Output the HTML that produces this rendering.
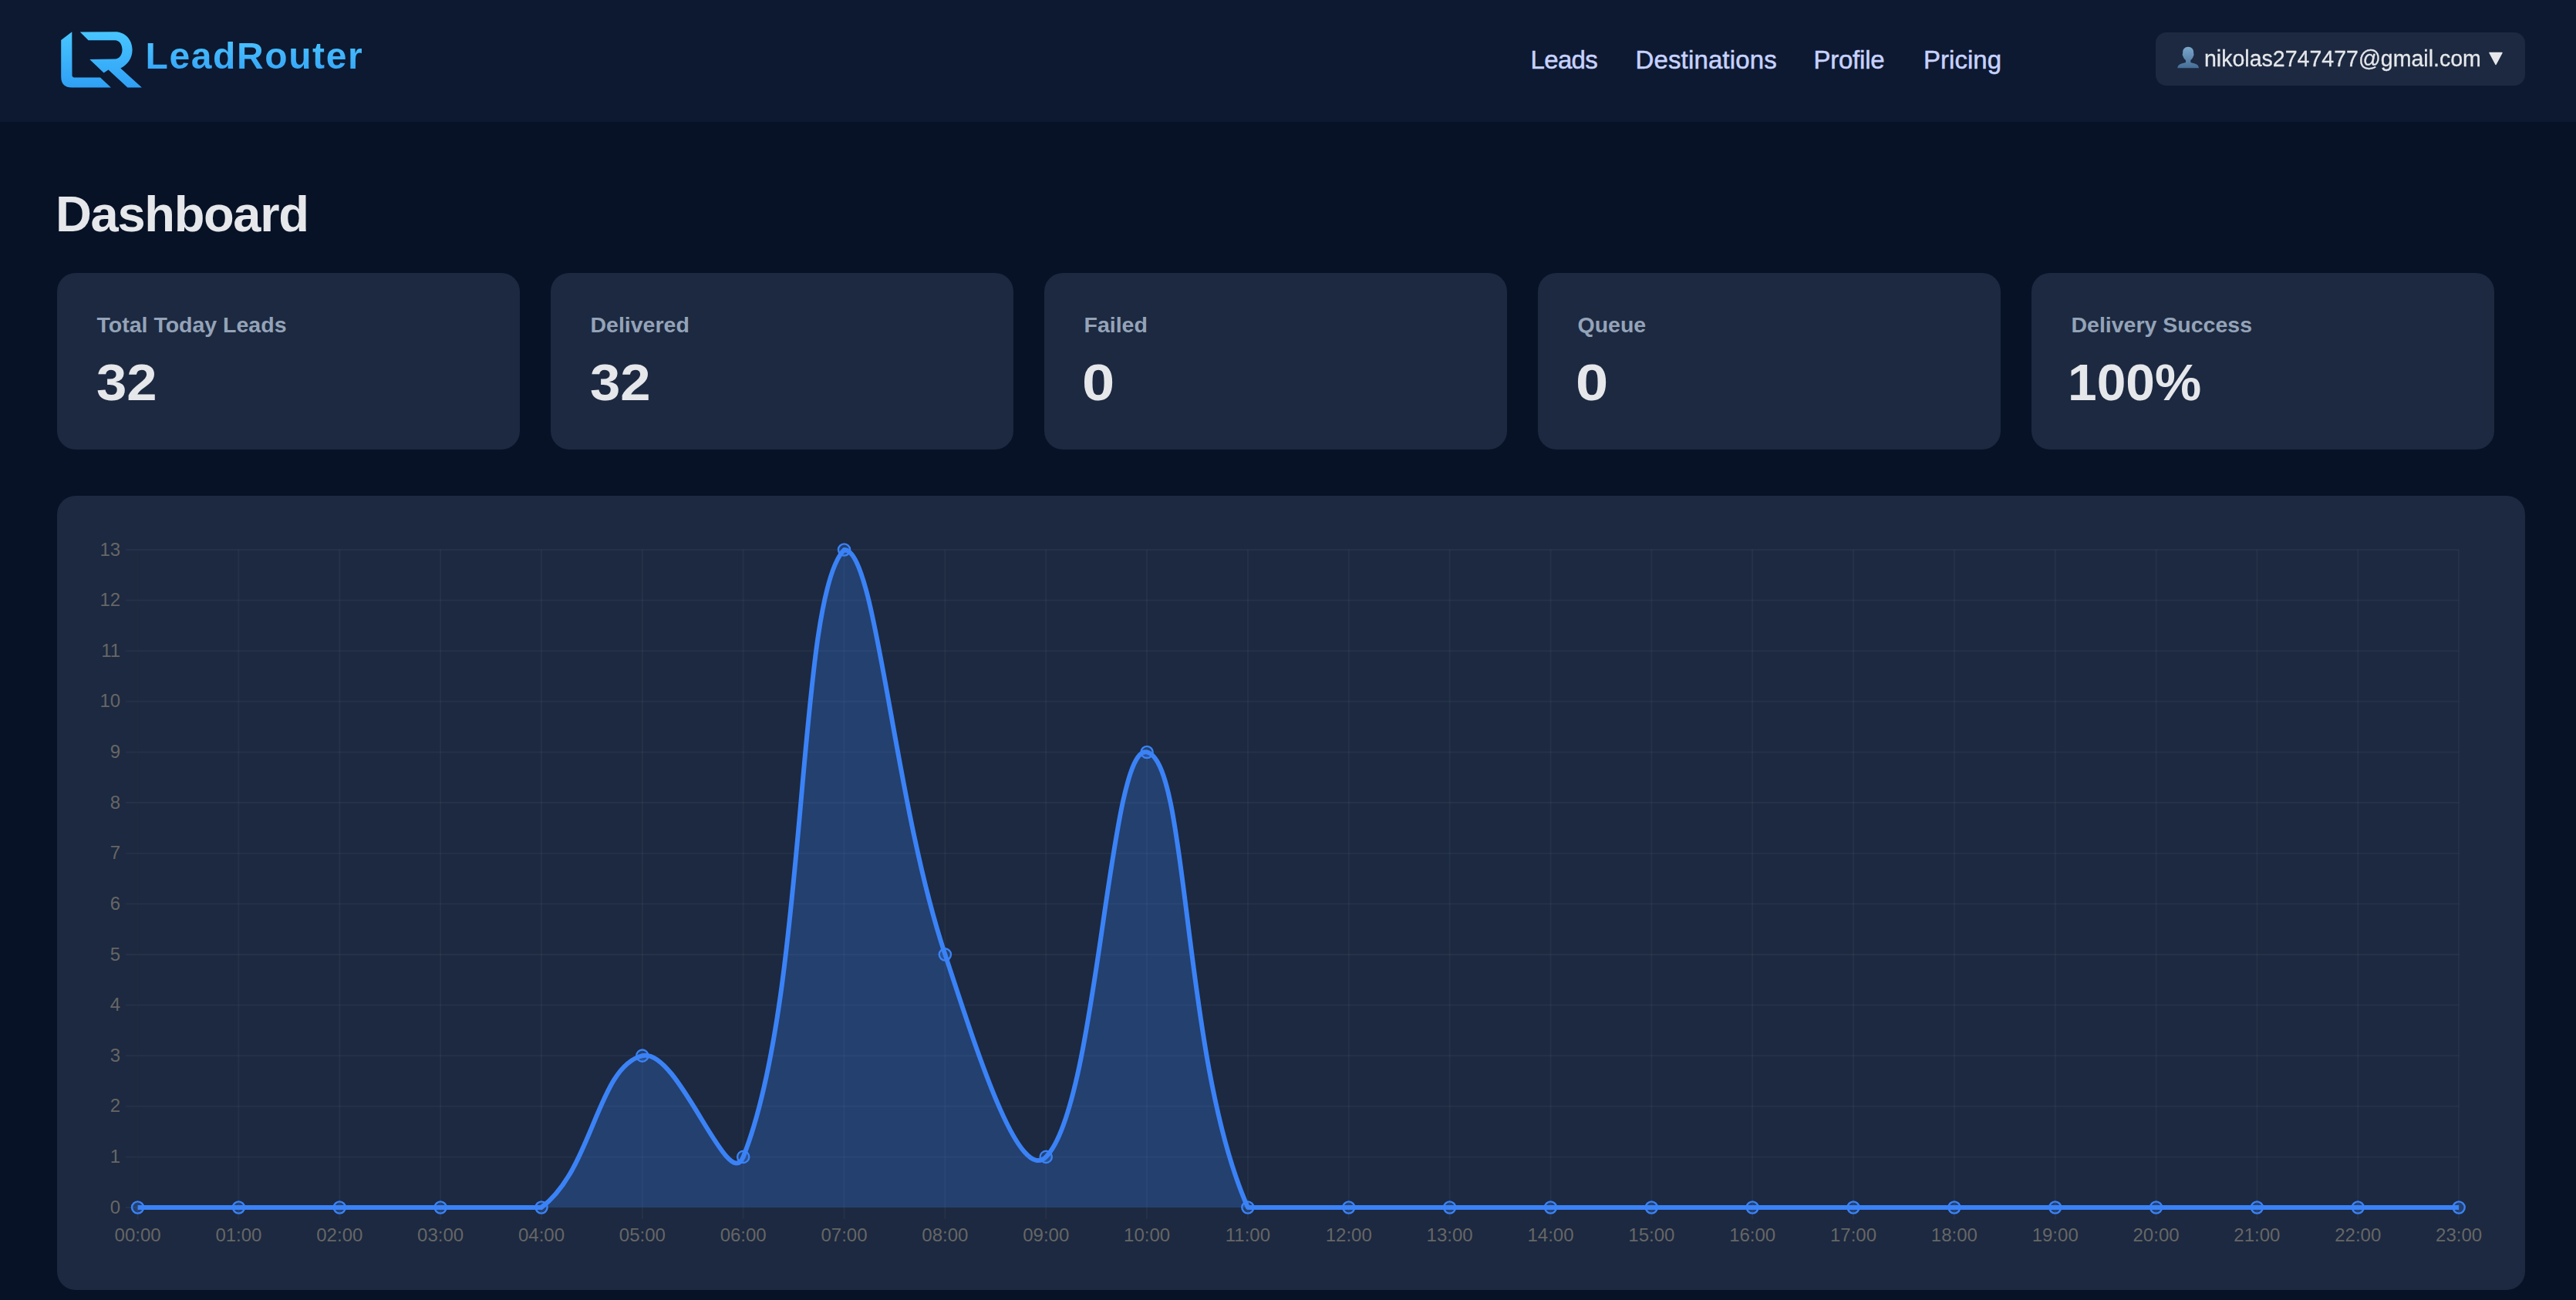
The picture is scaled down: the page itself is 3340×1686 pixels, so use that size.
<!DOCTYPE html><html><head><meta charset="utf-8"><style>
html,body{margin:0;padding:0;width:3340px;height:1686px;overflow:hidden;background:#071226;font-family:"Liberation Sans",sans-serif;}
.abs{position:absolute}
</style></head><body>
<div class="abs" style="left:0;top:0;width:3340px;height:158px;background:#0d1931;"></div>
<div class="abs" style="left:0;top:157px;width:3340px;height:1px;background:#0a1934"></div>

<svg class="abs" style="left:0;top:0" width="300" height="158" viewBox="0 0 300 158">
<defs><linearGradient id="lg" x1="0" y1="41" x2="0" y2="114" gradientUnits="userSpaceOnUse">
<stop offset="0" stop-color="#48c6ff"/><stop offset="1" stop-color="#2f9ff5"/></linearGradient></defs>
<path fill="url(#lg)" d="M93.3 41.2 L79.2 52 L79.2 99.5 Q79.2 113.5 93.2 113.5 L143.9 113.5 L130 100.4 L96.3 100.4 Q93.5 100.4 93.5 97.6 Z"/>
<path fill="url(#lg)" d="M103.8 41.4 L150.8 41.2 C163 42 171.6 52 171.6 64.6 C171.6 76 165 84.5 156.3 88.4 L183.9 113.5 L165.4 113.5 L140.5 90.4 L134.6 94.6 L116.2 76.9 L149.2 76.6 C154.5 76.6 158.5 71.5 158.5 64.6 C158.5 57.5 154.5 52.3 149.2 52.3 L114.6 52.3 Z"/>
</svg>
<div style="position:absolute;left:188.6px;top:49.37px;font-size:48px;line-height:48px;font-weight:700;color:#3fb6fb;letter-spacing:1.59px;white-space:nowrap;background:linear-gradient(#4cc4ff,#33a3f7);-webkit-background-clip:text;background-clip:text;color:transparent;">LeadRouter</div>
<div style="position:absolute;left:1984.6px;top:60.97px;font-size:33px;line-height:33px;font-weight:400;color:#c7d2fe;letter-spacing:-0.68px;white-space:nowrap;-webkit-text-stroke:0.5px #c7d2fe;">Leads</div>
<div style="position:absolute;left:2120.5px;top:60.97px;font-size:33px;line-height:33px;font-weight:400;color:#c7d2fe;letter-spacing:0.14px;white-space:nowrap;-webkit-text-stroke:0.5px #c7d2fe;">Destinations</div>
<div style="position:absolute;left:2351.4px;top:60.97px;font-size:33px;line-height:33px;font-weight:400;color:#c7d2fe;letter-spacing:-0.22px;white-space:nowrap;-webkit-text-stroke:0.5px #c7d2fe;">Profile</div>
<div style="position:absolute;left:2493.9px;top:60.97px;font-size:33px;line-height:33px;font-weight:400;color:#c7d2fe;letter-spacing:0.06px;white-space:nowrap;-webkit-text-stroke:0.5px #c7d2fe;">Pricing</div>
<div class="abs" style="left:2795px;top:42px;width:479px;height:69px;border-radius:14px;background:#1c2940"></div>
<svg class="abs" style="left:2820px;top:58px" width="34" height="32" viewBox="0 0 34 32">
<defs><linearGradient id="ug" x1="0" y1="3" x2="0" y2="30" gradientUnits="userSpaceOnUse"><stop offset="0" stop-color="#7ba7cc"/><stop offset="1" stop-color="#466e97"/></linearGradient></defs>
<path fill="url(#ug)" d="M17.1 2.8 C21.5 2.8 24.1 5.8 24.1 9.5 L24.3 12 C24.8 12.5 24.6 14 24 14.5 C23.3 17 22 19 20.3 20 L20.3 23 C22 23.8 26 24.2 28.5 25.8 C30.3 27 31 29 31 30.2 L3.3 30.2 C3.3 29 4 27 5.8 25.8 C8.3 24.2 12.3 23.8 14 23 L14 20 C12.3 19 11 17 10.3 14.5 C9.7 14 9.5 12.5 10 12 L10.2 9.5 C10.2 5.8 12.8 2.8 17.1 2.8 Z"/></svg>
<div style="position:absolute;left:2857.5px;top:61.41px;font-size:30px;line-height:30px;font-weight:400;color:#e5e7eb;letter-spacing:0px;white-space:nowrap;-webkit-text-stroke:0.3px #e5e7eb;transform:scaleX(0.951);transform-origin:0 0;">nikolas2747477@gmail.com</div>
<svg class="abs" style="left:3226px;top:66px" width="20" height="20" viewBox="0 0 20 20"><path d="M2 2.5 L18 2.5 L10 17.5 Z" fill="#e5e7eb" stroke="#e5e7eb" stroke-width="1.5" stroke-linejoin="round"/></svg>
<div style="position:absolute;left:72px;top:245.28px;font-size:65px;line-height:65px;font-weight:700;color:#e5e7eb;letter-spacing:-1.33px;white-space:nowrap;">Dashboard</div>
<div class="abs" style="left:74px;top:354px;width:600px;height:229px;border-radius:24px;background:#1c2940"></div>
<div style="position:absolute;left:125.5px;top:406.87px;font-size:28.5px;line-height:28.5px;font-weight:700;color:#94a3b8;letter-spacing:0px;white-space:nowrap;">Total Today Leads</div>
<div style="position:absolute;left:124.5px;top:463.33px;font-size:66px;line-height:66px;font-weight:700;color:#e5e7eb;letter-spacing:0px;white-space:nowrap;transform:scaleX(1.07);transform-origin:0 0;">32</div>
<div class="abs" style="left:714px;top:354px;width:600px;height:229px;border-radius:24px;background:#1c2940"></div>
<div style="position:absolute;left:765.5px;top:406.87px;font-size:28.5px;line-height:28.5px;font-weight:700;color:#94a3b8;letter-spacing:0px;white-space:nowrap;">Delivered</div>
<div style="position:absolute;left:764.5px;top:463.33px;font-size:66px;line-height:66px;font-weight:700;color:#e5e7eb;letter-spacing:0px;white-space:nowrap;transform:scaleX(1.07);transform-origin:0 0;">32</div>
<div class="abs" style="left:1354px;top:354px;width:600px;height:229px;border-radius:24px;background:#1c2940"></div>
<div style="position:absolute;left:1405.5px;top:406.87px;font-size:28.5px;line-height:28.5px;font-weight:700;color:#94a3b8;letter-spacing:0px;white-space:nowrap;">Failed</div>
<div style="position:absolute;left:1403px;top:463.33px;font-size:66px;line-height:66px;font-weight:700;color:#e5e7eb;letter-spacing:0px;white-space:nowrap;transform:scaleX(1.15);transform-origin:0 0;">0</div>
<div class="abs" style="left:1994px;top:354px;width:600px;height:229px;border-radius:24px;background:#1c2940"></div>
<div style="position:absolute;left:2045.5px;top:406.87px;font-size:28.5px;line-height:28.5px;font-weight:700;color:#94a3b8;letter-spacing:0px;white-space:nowrap;">Queue</div>
<div style="position:absolute;left:2043px;top:463.33px;font-size:66px;line-height:66px;font-weight:700;color:#e5e7eb;letter-spacing:0px;white-space:nowrap;transform:scaleX(1.15);transform-origin:0 0;">0</div>
<div class="abs" style="left:2634px;top:354px;width:600px;height:229px;border-radius:24px;background:#1c2940"></div>
<div style="position:absolute;left:2685.5px;top:406.87px;font-size:28.5px;line-height:28.5px;font-weight:700;color:#94a3b8;letter-spacing:0px;white-space:nowrap;">Delivery Success</div>
<div style="position:absolute;left:2680.5px;top:463.33px;font-size:66px;line-height:66px;font-weight:700;color:#e5e7eb;letter-spacing:0px;white-space:nowrap;transform:scaleX(1.026);transform-origin:0 0;">100%</div>
<div class="abs" style="left:74px;top:643px;width:3200px;height:1030px;border-radius:24px;background:#1c2940"></div>
<svg width="3340" height="1686" viewBox="0 0 3340 1686" style="position:absolute;left:0;top:0">
<line x1="163" y1="1566.00" x2="3188.10" y2="1566.00" stroke="rgba(148,163,184,0.065)" stroke-width="2"/>
<line x1="163" y1="1500.38" x2="3188.10" y2="1500.38" stroke="rgba(148,163,184,0.065)" stroke-width="2"/>
<line x1="163" y1="1434.77" x2="3188.10" y2="1434.77" stroke="rgba(148,163,184,0.065)" stroke-width="2"/>
<line x1="163" y1="1369.15" x2="3188.10" y2="1369.15" stroke="rgba(148,163,184,0.065)" stroke-width="2"/>
<line x1="163" y1="1303.54" x2="3188.10" y2="1303.54" stroke="rgba(148,163,184,0.065)" stroke-width="2"/>
<line x1="163" y1="1237.92" x2="3188.10" y2="1237.92" stroke="rgba(148,163,184,0.065)" stroke-width="2"/>
<line x1="163" y1="1172.31" x2="3188.10" y2="1172.31" stroke="rgba(148,163,184,0.065)" stroke-width="2"/>
<line x1="163" y1="1106.69" x2="3188.10" y2="1106.69" stroke="rgba(148,163,184,0.065)" stroke-width="2"/>
<line x1="163" y1="1041.08" x2="3188.10" y2="1041.08" stroke="rgba(148,163,184,0.065)" stroke-width="2"/>
<line x1="163" y1="975.46" x2="3188.10" y2="975.46" stroke="rgba(148,163,184,0.065)" stroke-width="2"/>
<line x1="163" y1="909.85" x2="3188.10" y2="909.85" stroke="rgba(148,163,184,0.065)" stroke-width="2"/>
<line x1="163" y1="844.23" x2="3188.10" y2="844.23" stroke="rgba(148,163,184,0.065)" stroke-width="2"/>
<line x1="163" y1="778.62" x2="3188.10" y2="778.62" stroke="rgba(148,163,184,0.065)" stroke-width="2"/>
<line x1="163" y1="713.00" x2="3188.10" y2="713.00" stroke="rgba(148,163,184,0.065)" stroke-width="2"/>
<line x1="178.60" y1="713.00" x2="178.60" y2="1581" stroke="rgba(148,163,184,0.065)" stroke-width="2"/>
<line x1="309.45" y1="713.00" x2="309.45" y2="1581" stroke="rgba(148,163,184,0.065)" stroke-width="2"/>
<line x1="440.30" y1="713.00" x2="440.30" y2="1581" stroke="rgba(148,163,184,0.065)" stroke-width="2"/>
<line x1="571.14" y1="713.00" x2="571.14" y2="1581" stroke="rgba(148,163,184,0.065)" stroke-width="2"/>
<line x1="701.99" y1="713.00" x2="701.99" y2="1581" stroke="rgba(148,163,184,0.065)" stroke-width="2"/>
<line x1="832.84" y1="713.00" x2="832.84" y2="1581" stroke="rgba(148,163,184,0.065)" stroke-width="2"/>
<line x1="963.69" y1="713.00" x2="963.69" y2="1581" stroke="rgba(148,163,184,0.065)" stroke-width="2"/>
<line x1="1094.53" y1="713.00" x2="1094.53" y2="1581" stroke="rgba(148,163,184,0.065)" stroke-width="2"/>
<line x1="1225.38" y1="713.00" x2="1225.38" y2="1581" stroke="rgba(148,163,184,0.065)" stroke-width="2"/>
<line x1="1356.23" y1="713.00" x2="1356.23" y2="1581" stroke="rgba(148,163,184,0.065)" stroke-width="2"/>
<line x1="1487.08" y1="713.00" x2="1487.08" y2="1581" stroke="rgba(148,163,184,0.065)" stroke-width="2"/>
<line x1="1617.93" y1="713.00" x2="1617.93" y2="1581" stroke="rgba(148,163,184,0.065)" stroke-width="2"/>
<line x1="1748.77" y1="713.00" x2="1748.77" y2="1581" stroke="rgba(148,163,184,0.065)" stroke-width="2"/>
<line x1="1879.62" y1="713.00" x2="1879.62" y2="1581" stroke="rgba(148,163,184,0.065)" stroke-width="2"/>
<line x1="2010.47" y1="713.00" x2="2010.47" y2="1581" stroke="rgba(148,163,184,0.065)" stroke-width="2"/>
<line x1="2141.32" y1="713.00" x2="2141.32" y2="1581" stroke="rgba(148,163,184,0.065)" stroke-width="2"/>
<line x1="2272.17" y1="713.00" x2="2272.17" y2="1581" stroke="rgba(148,163,184,0.065)" stroke-width="2"/>
<line x1="2403.01" y1="713.00" x2="2403.01" y2="1581" stroke="rgba(148,163,184,0.065)" stroke-width="2"/>
<line x1="2533.86" y1="713.00" x2="2533.86" y2="1581" stroke="rgba(148,163,184,0.065)" stroke-width="2"/>
<line x1="2664.71" y1="713.00" x2="2664.71" y2="1581" stroke="rgba(148,163,184,0.065)" stroke-width="2"/>
<line x1="2795.56" y1="713.00" x2="2795.56" y2="1581" stroke="rgba(148,163,184,0.065)" stroke-width="2"/>
<line x1="2926.40" y1="713.00" x2="2926.40" y2="1581" stroke="rgba(148,163,184,0.065)" stroke-width="2"/>
<line x1="3057.25" y1="713.00" x2="3057.25" y2="1581" stroke="rgba(148,163,184,0.065)" stroke-width="2"/>
<line x1="3188.10" y1="713.00" x2="3188.10" y2="1581" stroke="rgba(148,163,184,0.065)" stroke-width="2"/>
<line x1="178.60" y1="713.00" x2="178.60" y2="1566.00" stroke="rgba(0,0,0,0.12)" stroke-width="2"/>
<line x1="178.60" y1="1566.00" x2="3188.10" y2="1566.00" stroke="rgba(0,0,0,0.12)" stroke-width="2"/>
<g font-family="Liberation Sans" font-size="24" fill="#666666">
<text x="156.2" y="1573.60" text-anchor="end">0</text>
<text x="156.2" y="1507.98" text-anchor="end">1</text>
<text x="156.2" y="1442.37" text-anchor="end">2</text>
<text x="156.2" y="1376.75" text-anchor="end">3</text>
<text x="156.2" y="1311.14" text-anchor="end">4</text>
<text x="156.2" y="1245.52" text-anchor="end">5</text>
<text x="156.2" y="1179.91" text-anchor="end">6</text>
<text x="156.2" y="1114.29" text-anchor="end">7</text>
<text x="156.2" y="1048.68" text-anchor="end">8</text>
<text x="156.2" y="983.06" text-anchor="end">9</text>
<text x="156.2" y="917.45" text-anchor="end">10</text>
<text x="156.2" y="851.83" text-anchor="end">11</text>
<text x="156.2" y="786.22" text-anchor="end">12</text>
<text x="156.2" y="720.60" text-anchor="end">13</text>
<text x="178.60" y="1610" text-anchor="middle">00:00</text>
<text x="309.45" y="1610" text-anchor="middle">01:00</text>
<text x="440.30" y="1610" text-anchor="middle">02:00</text>
<text x="571.14" y="1610" text-anchor="middle">03:00</text>
<text x="701.99" y="1610" text-anchor="middle">04:00</text>
<text x="832.84" y="1610" text-anchor="middle">05:00</text>
<text x="963.69" y="1610" text-anchor="middle">06:00</text>
<text x="1094.53" y="1610" text-anchor="middle">07:00</text>
<text x="1225.38" y="1610" text-anchor="middle">08:00</text>
<text x="1356.23" y="1610" text-anchor="middle">09:00</text>
<text x="1487.08" y="1610" text-anchor="middle">10:00</text>
<text x="1617.93" y="1610" text-anchor="middle">11:00</text>
<text x="1748.77" y="1610" text-anchor="middle">12:00</text>
<text x="1879.62" y="1610" text-anchor="middle">13:00</text>
<text x="2010.47" y="1610" text-anchor="middle">14:00</text>
<text x="2141.32" y="1610" text-anchor="middle">15:00</text>
<text x="2272.17" y="1610" text-anchor="middle">16:00</text>
<text x="2403.01" y="1610" text-anchor="middle">17:00</text>
<text x="2533.86" y="1610" text-anchor="middle">18:00</text>
<text x="2664.71" y="1610" text-anchor="middle">19:00</text>
<text x="2795.56" y="1610" text-anchor="middle">20:00</text>
<text x="2926.40" y="1610" text-anchor="middle">21:00</text>
<text x="3057.25" y="1610" text-anchor="middle">22:00</text>
<text x="3188.10" y="1610" text-anchor="middle">23:00</text>
</g>
<path d="M178.60 1566.00 C230.94 1566.00 257.11 1566.00 309.45 1566.00 C361.79 1566.00 387.96 1566.00 440.30 1566.00 C492.63 1566.00 518.80 1566.00 571.14 1566.00 C623.48 1566.00 664.69 1566.00 701.99 1566.00 C769.37 1515.32 774.16 1383.87 832.84 1369.15 C878.84 1357.62 943.96 1549.84 963.69 1500.38 C1048.64 1287.38 1032.14 775.57 1094.53 713.00 C1136.82 713.00 1157.50 1033.69 1225.38 1237.92 C1262.18 1348.64 1319.43 1537.29 1356.23 1500.38 C1424.11 1432.31 1437.66 963.07 1487.08 975.46 C1542.34 989.32 1531.87 1371.80 1617.93 1566.00 C1636.54 1566.00 1696.43 1566.00 1748.77 1566.00 C1801.11 1566.00 1827.28 1566.00 1879.62 1566.00 C1931.96 1566.00 1958.13 1566.00 2010.47 1566.00 C2062.81 1566.00 2088.98 1566.00 2141.32 1566.00 C2193.66 1566.00 2219.83 1566.00 2272.17 1566.00 C2324.50 1566.00 2350.67 1566.00 2403.01 1566.00 C2455.35 1566.00 2481.52 1566.00 2533.86 1566.00 C2586.20 1566.00 2612.37 1566.00 2664.71 1566.00 C2717.05 1566.00 2743.22 1566.00 2795.56 1566.00 C2847.90 1566.00 2874.07 1566.00 2926.40 1566.00 C2978.74 1566.00 3004.91 1566.00 3057.25 1566.00 C3109.59 1566.00 3135.76 1566.00 3188.10 1566.00 L3188.10 1566.00 L178.60 1566.00 Z" fill="rgba(59,130,246,0.26)"/>
<path d="M178.60 1566.00 C230.94 1566.00 257.11 1566.00 309.45 1566.00 C361.79 1566.00 387.96 1566.00 440.30 1566.00 C492.63 1566.00 518.80 1566.00 571.14 1566.00 C623.48 1566.00 664.69 1566.00 701.99 1566.00 C769.37 1515.32 774.16 1383.87 832.84 1369.15 C878.84 1357.62 943.96 1549.84 963.69 1500.38 C1048.64 1287.38 1032.14 775.57 1094.53 713.00 C1136.82 713.00 1157.50 1033.69 1225.38 1237.92 C1262.18 1348.64 1319.43 1537.29 1356.23 1500.38 C1424.11 1432.31 1437.66 963.07 1487.08 975.46 C1542.34 989.32 1531.87 1371.80 1617.93 1566.00 C1636.54 1566.00 1696.43 1566.00 1748.77 1566.00 C1801.11 1566.00 1827.28 1566.00 1879.62 1566.00 C1931.96 1566.00 1958.13 1566.00 2010.47 1566.00 C2062.81 1566.00 2088.98 1566.00 2141.32 1566.00 C2193.66 1566.00 2219.83 1566.00 2272.17 1566.00 C2324.50 1566.00 2350.67 1566.00 2403.01 1566.00 C2455.35 1566.00 2481.52 1566.00 2533.86 1566.00 C2586.20 1566.00 2612.37 1566.00 2664.71 1566.00 C2717.05 1566.00 2743.22 1566.00 2795.56 1566.00 C2847.90 1566.00 2874.07 1566.00 2926.40 1566.00 C2978.74 1566.00 3004.91 1566.00 3057.25 1566.00 C3109.59 1566.00 3135.76 1566.00 3188.10 1566.00" fill="none" stroke="#3b82f6" stroke-width="6" stroke-linejoin="round"/>
<circle cx="178.60" cy="1566.00" r="7.6" fill="rgba(59,130,246,0.26)" stroke="#3b82f6" stroke-width="2.4"/>
<circle cx="309.45" cy="1566.00" r="7.6" fill="rgba(59,130,246,0.26)" stroke="#3b82f6" stroke-width="2.4"/>
<circle cx="440.30" cy="1566.00" r="7.6" fill="rgba(59,130,246,0.26)" stroke="#3b82f6" stroke-width="2.4"/>
<circle cx="571.14" cy="1566.00" r="7.6" fill="rgba(59,130,246,0.26)" stroke="#3b82f6" stroke-width="2.4"/>
<circle cx="701.99" cy="1566.00" r="7.6" fill="rgba(59,130,246,0.26)" stroke="#3b82f6" stroke-width="2.4"/>
<circle cx="832.84" cy="1369.15" r="7.6" fill="rgba(59,130,246,0.26)" stroke="#3b82f6" stroke-width="2.4"/>
<circle cx="963.69" cy="1500.38" r="7.6" fill="rgba(59,130,246,0.26)" stroke="#3b82f6" stroke-width="2.4"/>
<circle cx="1094.53" cy="713.00" r="7.6" fill="rgba(59,130,246,0.26)" stroke="#3b82f6" stroke-width="2.4"/>
<circle cx="1225.38" cy="1237.92" r="7.6" fill="rgba(59,130,246,0.26)" stroke="#3b82f6" stroke-width="2.4"/>
<circle cx="1356.23" cy="1500.38" r="7.6" fill="rgba(59,130,246,0.26)" stroke="#3b82f6" stroke-width="2.4"/>
<circle cx="1487.08" cy="975.46" r="7.6" fill="rgba(59,130,246,0.26)" stroke="#3b82f6" stroke-width="2.4"/>
<circle cx="1617.93" cy="1566.00" r="7.6" fill="rgba(59,130,246,0.26)" stroke="#3b82f6" stroke-width="2.4"/>
<circle cx="1748.77" cy="1566.00" r="7.6" fill="rgba(59,130,246,0.26)" stroke="#3b82f6" stroke-width="2.4"/>
<circle cx="1879.62" cy="1566.00" r="7.6" fill="rgba(59,130,246,0.26)" stroke="#3b82f6" stroke-width="2.4"/>
<circle cx="2010.47" cy="1566.00" r="7.6" fill="rgba(59,130,246,0.26)" stroke="#3b82f6" stroke-width="2.4"/>
<circle cx="2141.32" cy="1566.00" r="7.6" fill="rgba(59,130,246,0.26)" stroke="#3b82f6" stroke-width="2.4"/>
<circle cx="2272.17" cy="1566.00" r="7.6" fill="rgba(59,130,246,0.26)" stroke="#3b82f6" stroke-width="2.4"/>
<circle cx="2403.01" cy="1566.00" r="7.6" fill="rgba(59,130,246,0.26)" stroke="#3b82f6" stroke-width="2.4"/>
<circle cx="2533.86" cy="1566.00" r="7.6" fill="rgba(59,130,246,0.26)" stroke="#3b82f6" stroke-width="2.4"/>
<circle cx="2664.71" cy="1566.00" r="7.6" fill="rgba(59,130,246,0.26)" stroke="#3b82f6" stroke-width="2.4"/>
<circle cx="2795.56" cy="1566.00" r="7.6" fill="rgba(59,130,246,0.26)" stroke="#3b82f6" stroke-width="2.4"/>
<circle cx="2926.40" cy="1566.00" r="7.6" fill="rgba(59,130,246,0.26)" stroke="#3b82f6" stroke-width="2.4"/>
<circle cx="3057.25" cy="1566.00" r="7.6" fill="rgba(59,130,246,0.26)" stroke="#3b82f6" stroke-width="2.4"/>
<circle cx="3188.10" cy="1566.00" r="7.6" fill="rgba(59,130,246,0.26)" stroke="#3b82f6" stroke-width="2.4"/>
</svg>
</body></html>
